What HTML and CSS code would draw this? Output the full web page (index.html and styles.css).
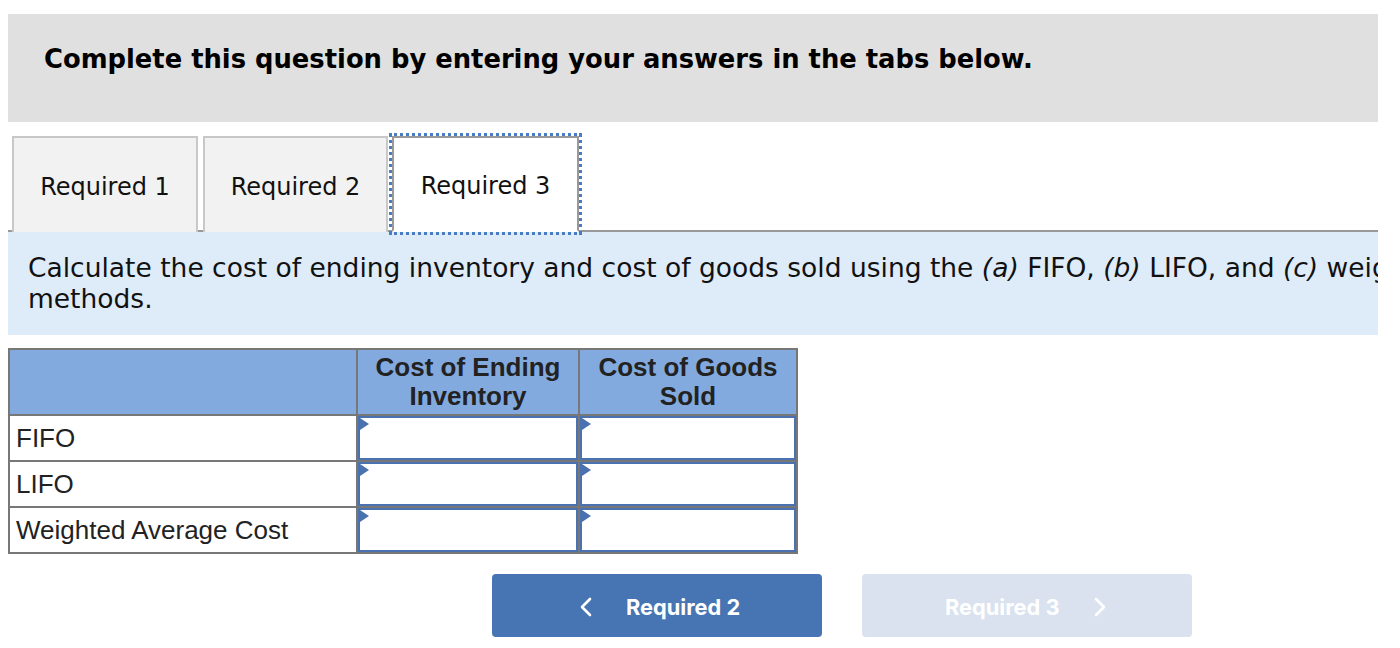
FILE: index.html
```html
<!DOCTYPE html>
<html>
<head>
<meta charset="utf-8">
<link rel="stylesheet" href="styles.css">
</head>
<body>
<div class="page">
  <div class="instructions">Complete this question by entering your answers in the tabs below.</div>
  <div class="tabs">
    <div class="tab t1">Required 1</div>
    <div class="tab t2">Required 2</div>
    <div class="tab active">Required 3</div>
  </div>
  <div class="prompt">Calculate the cost of ending inventory and cost of goods sold using the <i>(a)</i> FIFO, <i>(b)</i> LIFO, and <i>(c)</i> weighted average cost methods.</div>
  <table class="grid">
    <thead>
      <tr>
        <th class="label-col"></th>
        <th class="val-col">Cost of Ending<br>Inventory</th>
        <th class="val-col2">Cost of Goods<br>Sold</th>
      </tr>
    </thead>
    <tbody>
      <tr>
        <td class="label">FIFO</td>
        <td class="cell"><div class="input"><span class="flag"></span></div></td>
        <td class="cell"><div class="input"><span class="flag"></span></div></td>
      </tr>
      <tr>
        <td class="label">LIFO</td>
        <td class="cell"><div class="input"><span class="flag"></span></div></td>
        <td class="cell"><div class="input"><span class="flag"></span></div></td>
      </tr>
      <tr>
        <td class="label">Weighted Average Cost</td>
        <td class="cell"><div class="input"><span class="flag"></span></div></td>
        <td class="cell"><div class="input"><span class="flag"></span></div></td>
      </tr>
    </tbody>
  </table>
  <div class="nav">
    <div class="btn prev">
      <svg class="chev" width="12" height="20" viewBox="0 0 12 20"><polyline points="10,2 2,10 10,18" fill="none" stroke="#fff" stroke-width="2.6" stroke-linecap="round" stroke-linejoin="round"/></svg>
      <span>Required 2</span>
    </div>
    <div class="btn next">
      <span>Required 3</span>
      <svg class="chev" width="12" height="20" viewBox="0 0 12 20"><polyline points="2,2 10,10 2,18" fill="none" stroke="#fff" stroke-width="2.6" stroke-linecap="round" stroke-linejoin="round"/></svg>
    </div>
  </div>
</div>
</body>
</html>
```
FILE: styles.css
```css
html, body {
  margin: 0;
  padding: 0;
  background: #fff;
}
.page {
  width: 1370px;
  margin-left: 8px;
  overflow: hidden;
}
.instructions {
  margin-top: 14px;
  height: 108px;
  box-sizing: border-box;
  background: #e0e0e0;
  padding: 30px 0 0 36px;
  font: bold 25.8px "DejaVu Sans", Verdana, sans-serif;
  color: #000;
  white-space: nowrap;
}
.tabs {
  display: flex;
  gap: 5px;
  padding: 14px 0 0 4px;
  border-bottom: 2px solid #999;
  height: 94px;
}
.tab {
  box-sizing: border-box;
  width: 186px;
  height: 96px;
  background: #f2f2f2;
  border: 2px solid #c8c8c8;
  border-bottom: none;
  display: flex;
  align-items: center;
  justify-content: center;
  font: 24px "DejaVu Sans", Verdana, sans-serif;
  color: #111;
  padding-top: 3px;
}
.tab.t2 {
  width: 185px;
}
.tab.active {
  background: #fff;
  border-color: #999;
  border-bottom: 2px solid #fff;
  width: 187px;
  margin-left: -1px;
  outline: 3px dotted #4a7cc4;
  outline-offset: 0px;
  position: relative;
  z-index: 1;
  height: 96px;
}
.prompt {
  background: #deebf8;
  padding: 20px 10px 0 20px;
  height: 103px;
  box-sizing: border-box;
  font: 26.5px/31px "DejaVu Sans", Verdana, sans-serif;
  color: #111;
  width: 1700px;
}
.grid {
  margin-top: 13px;
  border-collapse: collapse;
  border: 2px solid #777;
  font-family: "Liberation Sans", Arial, sans-serif;
  color: #222;
}
.grid th {
  background: #82aadf;
  border: 2px solid #777;
  height: 64px;
  padding: 0;
  font: bold 26px/29px "Liberation Sans", Arial, sans-serif;
  color: #222;
  vertical-align: middle;
}
.label-col { width: 346px; }
.val-col { width: 220px; }
.val-col2 { width: 216px; }
.grid td {
  border: 2px solid #777;
  height: 44px;
  padding: 0;
}
.grid td.label {
  font-size: 26px;
  padding-left: 6px;
  color: #222;
}
.input {
  box-sizing: border-box;
  height: 44px;
  border: 2px solid #4a72b0;
  position: relative;
  background: #fff;
}
.flag {
  position: absolute;
  left: 0;
  top: 0;
  width: 0;
  height: 0;
  border-top: 6px solid transparent;
  border-bottom: 6px solid transparent;
  border-left: 9px solid #4a72b0;
}
.nav {
  display: flex;
  gap: 40px;
  padding: 20px 0 0 484px;
}
.btn {
  width: 330px;
  height: 63px;
  border-radius: 4px;
  display: flex;
  align-items: center;
  justify-content: flex-start;
  gap: 34px;
  font: bold 21.8px Inter, "Open Sans", sans-serif;
  color: #fff;
  box-sizing: border-box;
  padding-top: 3px;
}
.btn.prev {
  background: #4775b3;
  padding-left: 88px;
}
.btn.next {
  background: #d9e2ee;
  padding-left: 83px;
}
.chev { display: block; }
```
